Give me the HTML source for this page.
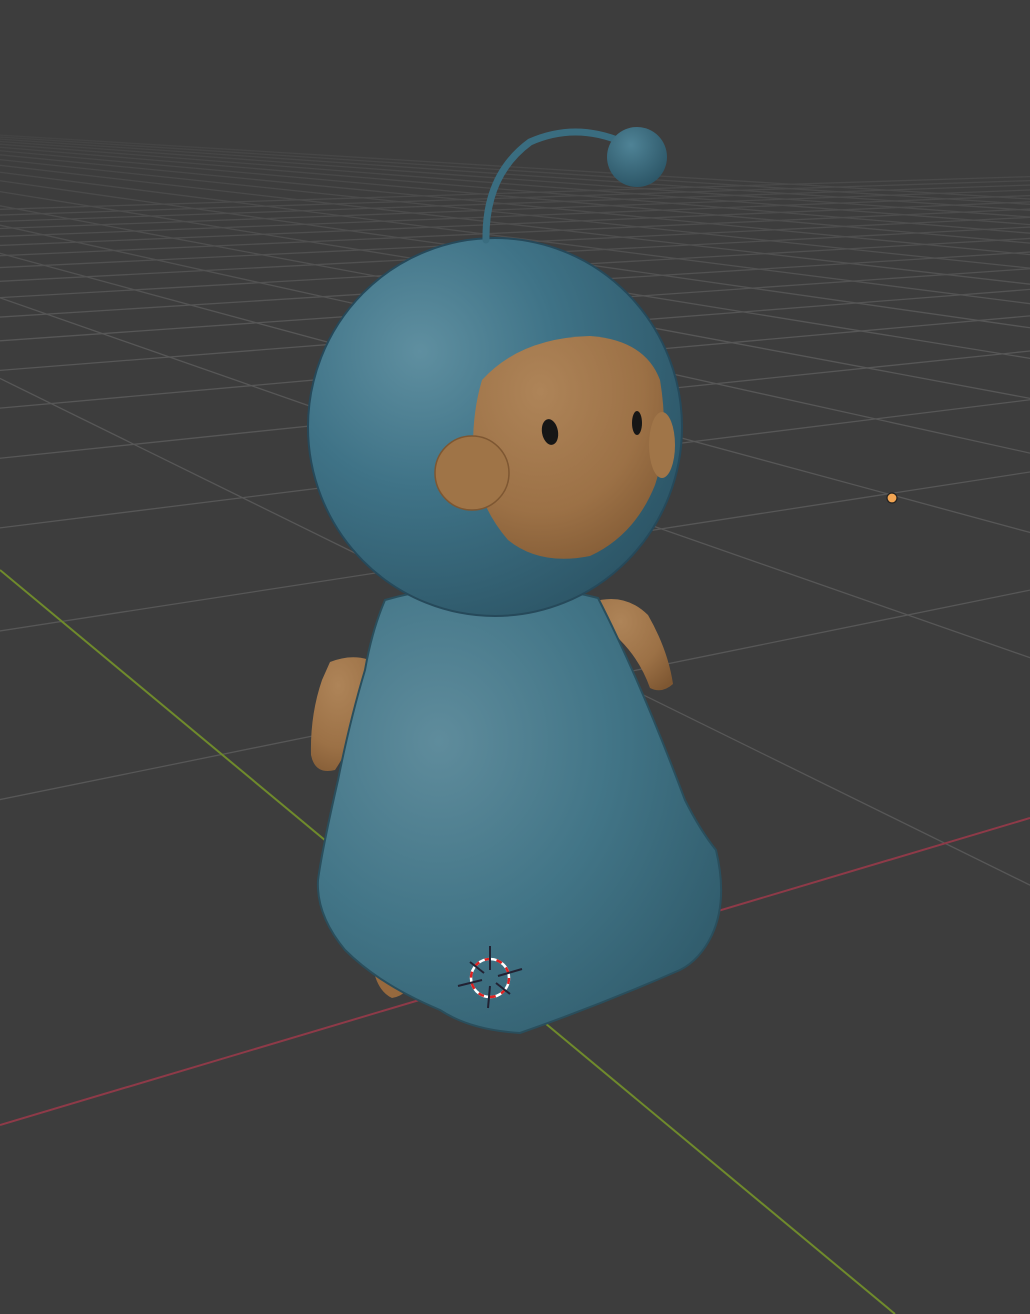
<!DOCTYPE html>
<html><head><meta charset="utf-8"><style>
html,body{margin:0;padding:0;background:#3d3d3d;overflow:hidden;width:1030px;height:1314px}
svg{display:block;overflow:hidden}
</style></head><body>
<svg id="s" width="1030" height="1314" viewBox="0 0 1030 1314" xmlns="http://www.w3.org/2000/svg">
<defs>
<radialGradient id="hb" cx="0.3" cy="0.3" r="0.8">
<stop offset="0" stop-color="#5f8fa0"/><stop offset="0.45" stop-color="#3f7387"/><stop offset="1" stop-color="#2c5566"/>
</radialGradient>
<radialGradient id="cb" cx="0.3" cy="0.35" r="0.85">
<stop offset="0" stop-color="#5f8c9c"/><stop offset="0.5" stop-color="#427587"/><stop offset="1" stop-color="#2f5a6a"/>
</radialGradient>
<radialGradient id="fb" cx="0.35" cy="0.25" r="0.9">
<stop offset="0" stop-color="#ae8458"/><stop offset="0.6" stop-color="#9c7146"/><stop offset="1" stop-color="#7e5732"/>
</radialGradient>
<radialGradient id="ab" cx="0.4" cy="0.3" r="0.7">
<stop offset="0" stop-color="#4f8396"/><stop offset="1" stop-color="#2d5768"/>
</radialGradient>
<linearGradient id="fade" x1="0" y1="0" x2="0" y2="1">
<stop offset="0" stop-color="#3d3d3d" stop-opacity="1"/><stop offset="0.3" stop-color="#3d3d3d" stop-opacity="1"/><stop offset="0.5" stop-color="#3d3d3d" stop-opacity="0.6"/><stop offset="1" stop-color="#3d3d3d" stop-opacity="0"/>
</linearGradient>
<clipPath id="cl"><rect width="1030" height="1314"/></clipPath>
</defs>
<rect width="1030" height="1314" fill="#3d3d3d"/>
<g id="grid" stroke="#575757" stroke-width="1.3" fill="none" clip-path="url(#cl)"></g>
<rect width="1030" height="330" fill="url(#fade)"/>
<line x1="0" y1="570" x2="895" y2="1314" stroke="#6f8a2c" stroke-width="2"/>
<line x1="0" y1="1125" x2="1030" y2="818" stroke="#8e3a48" stroke-width="2"/>

<path d="M372 960 Q375 990 392 998 Q410 995 412 975 Z" fill="#96693e"/>
<path d="M592 602 Q625 592 648 615 Q668 650 673 684 Q662 694 650 688 Q640 660 620 640 Z" fill="url(#fb)"/>
<path d="M330 662 Q360 650 385 668 Q395 690 378 700 L366 700 Q355 740 335 770 Q315 775 311 755 Q310 715 322 680 Z" fill="url(#fb)"/>
<path d="M385 600 Q490 570 598 598 Q640 680 685 800 Q700 830 716 850 Q728 900 712 935 Q700 960 680 970 Q600 1005 520 1033 Q470 1030 440 1010 Q380 985 345 950 Q316 915 318 880 Q322 850 338 780 Q350 720 365 670 Q372 630 385 600 Z" fill="url(#cb)" stroke="#2a4e5c" stroke-width="2"/>
<ellipse cx="495" cy="427" rx="187" ry="189" fill="url(#hb)" stroke="#26495a" stroke-width="2"/>
<path d="M486 240 Q485 175 530 142 Q575 122 622 142" stroke="#3a6d80" stroke-width="7" fill="none" stroke-linecap="round"/>
<circle cx="637" cy="157" r="30" fill="url(#ab)"/>
<path d="M482 380 Q520 338 590 336 Q645 340 660 380 Q670 440 655 485 Q635 535 590 556 Q540 566 508 540 Q482 510 474 470 Q470 420 482 380 Z" fill="url(#fb)"/>
<ellipse cx="662" cy="445" rx="13" ry="33" fill="#a07548"/>
<circle cx="472" cy="473" r="37" fill="#9f7447" stroke="#7e5732" stroke-width="1.5"/>
<ellipse cx="550" cy="432" rx="8" ry="13" fill="#161616" transform="rotate(-10 550 432)"/>
<ellipse cx="637" cy="423" rx="5" ry="12" fill="#161616"/>
<circle cx="892" cy="498" r="5" fill="#f2a553" stroke="#222" stroke-width="1.2"/>
<g transform="translate(490 978)">
<circle r="19" fill="none" stroke="#fff" stroke-width="2.5"/>
<circle r="19" fill="none" stroke="#d22" stroke-width="2.5" stroke-dasharray="6 6"/>
<line x1="0" y1="-32" x2="0" y2="-8" stroke="#223" stroke-width="2"/>
<line x1="0" y1="8" x2="-2" y2="30" stroke="#223" stroke-width="2"/>
<line x1="-32" y1="8" x2="-8" y2="2" stroke="#223" stroke-width="2"/>
<line x1="8" y1="-2" x2="32" y2="-9" stroke="#223" stroke-width="2"/>
<line x1="-20" y1="-16" x2="-6" y2="-5" stroke="#223" stroke-width="2"/>
<line x1="6" y1="5" x2="20" y2="16" stroke="#223" stroke-width="2"/>
</g>
</svg>
<script>
(function(){
var g=document.getElementById('grid');
var O=[491.6,978.6],VA=[3440,100],VB=[-566,100];
function ln(p,v){var dx=p[0]-v[0],dy=p[1]-v[1];
var e=[p[0]+dx*6,p[1]+dy*6];var f=[p[0]-dx*0.97,p[1]-dy*0.97];
var l=document.createElementNS('http://www.w3.org/2000/svg','line');
l.setAttribute('x1',e[0]);l.setAttribute('y1',e[1]);l.setAttribute('x2',f[0]);l.setAttribute('y2',f[1]);g.appendChild(l);}
var c=5.5,d=2.92;
for(var k=-4;k<=18;k++){if(k==0)continue;
 if(k+d<=0.2)continue;var t=k/(k+d);
 ln([O[0]+(VB[0]-O[0])*t,O[1]+(VB[1]-O[1])*t],VA);}
for(var k=-4;k<=18;k++){if(k==0)continue;
 if(k+c<=0.2)continue;var t=k/(k+c);
 ln([O[0]+(VA[0]-O[0])*t,O[1]+(VA[1]-O[1])*t],VB);}
})();
</script>
</body></html>
